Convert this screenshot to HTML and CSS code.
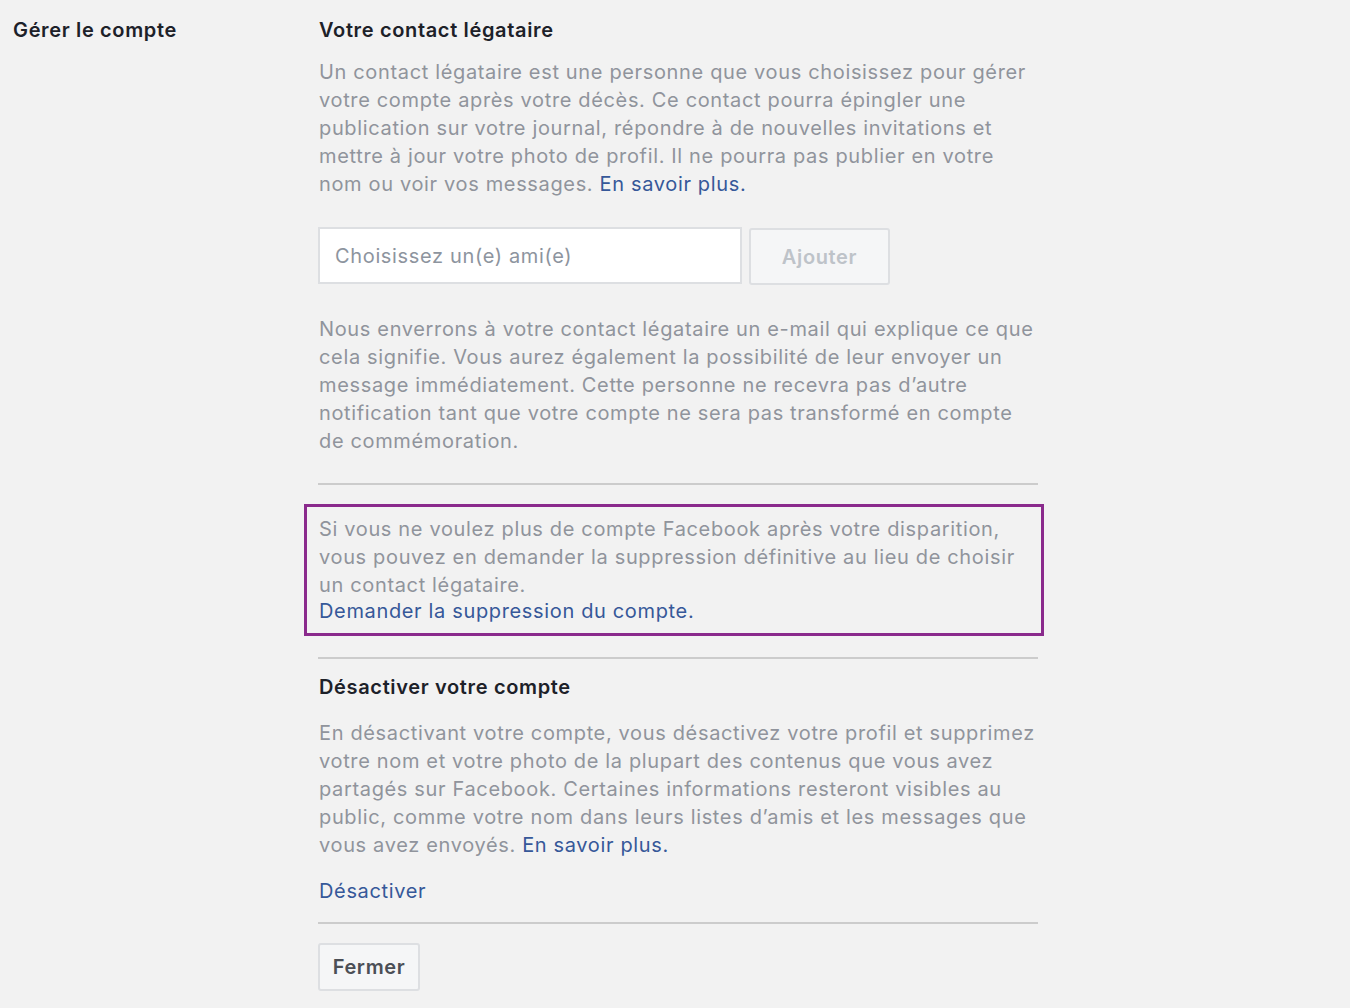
FILE: index.html
```html
<!DOCTYPE html>
<html lang="fr">
<head>
<meta charset="utf-8">
<title>Gérer le compte</title>
<link rel="stylesheet" href="styles.css">
</head>
<body>
<div class="page">
  <div class="label">Gérer le compte</div>
  <div class="content">
    <h2 class="title">Votre contact légataire</h2>
    <p class="text intro">Un contact légataire est une personne que vous choisissez pour gérer votre compte après votre décès. Ce contact pourra épingler une publication sur votre journal, répondre à de nouvelles invitations et mettre à jour votre photo de profil. Il ne pourra pas publier en votre nom ou voir vos messages. <a href="#" class="link">En savoir plus.</a></p>
    <div class="picker">
      <input class="friend" type="text" placeholder="Choisissez un(e) ami(e)">
      <button class="btn btn-add" type="button">Ajouter</button>
    </div>
    <p class="text notice">Nous enverrons à votre contact légataire un e-mail qui explique ce que cela signifie. Vous aurez également la possibilité de leur envoyer un message immédiatement. Cette personne ne recevra pas d’autre notification tant que votre compte ne sera pas transformé en compte de commémoration.</p>
    <hr class="sep sep-1">
    <div class="highlight">
      <p class="text">Si vous ne voulez plus de compte Facebook après votre disparition, vous pouvez en demander la suppression définitive au lieu de choisir un contact légataire.</p>
      <a href="#" class="link block-link">Demander la suppression du compte.</a>
    </div>
    <hr class="sep sep-2">
    <h2 class="title">Désactiver votre compte</h2>
    <p class="text deact">En désactivant votre compte, vous désactivez votre profil et supprimez votre nom et votre photo de la plupart des contenus que vous avez partagés sur Facebook. Certaines informations resteront visibles au public, comme votre nom dans leurs listes d’amis et les messages que vous avez envoyés. <a href="#" class="link">En savoir plus.</a></p>
    <a href="#" class="link deact-link">Désactiver</a>
    <hr class="sep sep-3">
    <button class="btn btn-close" type="button">Fermer</button>
  </div>
</div>
</body>
</html>
```

FILE: styles.css
```css
html, body {
  margin: 0;
  padding: 0;
  background: #f2f2f2;
}
body {
  font-family: Inter, "Noto Sans", "Liberation Sans", sans-serif;
  font-size: 20px;
  line-height: 28px;
  letter-spacing: 0.65px;
  color: #1d2129;
}
.page {
  display: grid;
  grid-template-columns: 318px 720px;
  padding-top: 16px;
}
.label {
  padding-left: 13px;
  font-weight: 600;
  color: #1d2129;
}
.content {
  display: flex;
  flex-direction: column;
  align-items: flex-start;
}
.title,
.text,
.deact-link {
  padding-left: 1px;
}
.title {
  margin: 0;
  font-size: 20px;
  line-height: 28px;
  font-weight: 600;
  color: #1d2129;
}
.text {
  margin: 0;
  color: #90949c;
}
.intro {
  margin-top: 14px;
}
.link {
  color: #365899;
  text-decoration: none;
}
.picker {
  display: flex;
  gap: 7px;
  margin-top: 29px;
  align-items: flex-start;
}
.friend {
  box-sizing: border-box;
  width: 424px;
  height: 57px;
  border: 2px solid #dddfe2;
  background: #fff;
  padding: 0 15px;
  font-family: inherit;
  font-size: 20px;
  letter-spacing: 0.65px;
  color: #1d2129;
  outline: none;
}
.friend::placeholder {
  color: #8d949e;
}
.btn {
  box-sizing: border-box;
  border: 2px solid #dddfe2;
  border-radius: 3px;
  background: #f5f6f7;
  font-family: inherit;
  font-size: 20px;
  letter-spacing: 0.65px;
  font-weight: 600;
  cursor: pointer;
  padding: 0;
}
.btn-add {
  width: 141px;
  height: 57px;
  margin-top: 1px;
  color: #bec3c9;
}
.notice {
  margin-top: 30px;
}
.sep {
  align-self: stretch;
  height: 2px;
  border: 0;
  background: #cccccc;
  margin: 0;
}
.sep-1 {
  margin-top: 28px;
}
.highlight {
  align-self: stretch;
  margin: 19px -6px 0 -14px;
  border: 3px solid #8a2a8c;
  padding: 8px 6px 10px 11px;
}
.block-link {
  display: block;
  line-height: 24px;
  padding-left: 1px;
}
.highlight .text {
  padding-left: 1px;
}
.sep-2 {
  margin-top: 21px;
}
.sep-2 + .title {
  margin-top: 14px;
}
.deact {
  margin-top: 18px;
}
.deact-link {
  margin-top: 18px;
}
.sep-3 {
  margin-top: 17px;
}
.btn-close {
  margin-top: 19px;
  width: 102px;
  height: 48px;
  color: #4b4f56;
}
```
